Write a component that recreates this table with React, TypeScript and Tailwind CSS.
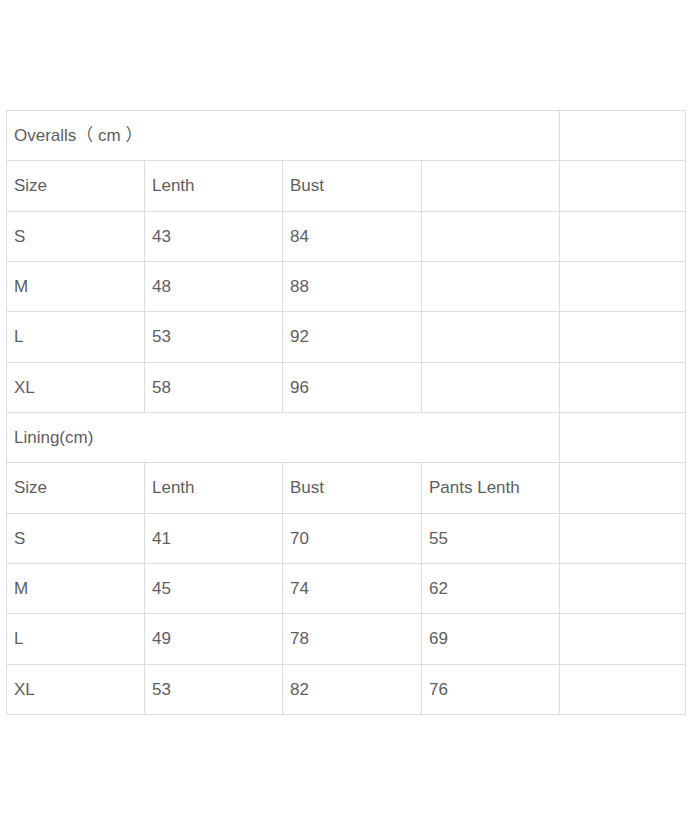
const overalls = [
  ['S', '43', '84', ''],
  ['M', '48', '88', ''],
  ['L', '53', '92', ''],
  ['XL', '58', '96', ''],
];

const lining = [
  ['S', '41', '70', '55'],
  ['M', '45', '74', '62'],
  ['L', '49', '78', '69'],
  ['XL', '53', '82', '76'],
];

const cell = 'border border-[#dcdcdc] px-[7px] align-middle text-left font-normal';

function Rows({ rows }: { rows: string[][] }) {
  return (
    <>
      {rows.map((r, i) => (
        <tr key={i} className="h-[50.33px]">
          {r.map((v, j) => (
            <td key={j} className={cell}>
              {v}
            </td>
          ))}
          <td className={cell}></td>
        </tr>
      ))}
    </>
  );
}

export default function App() {
  return (
    <div className="w-[700px] h-[823px] bg-white pt-[110px] pl-[6px] font-['Liberation_Sans','Noto_Sans_CJK_SC',sans-serif] text-[17px] text-[#5e5e5e]">
      <table className="border-collapse table-fixed w-[679px]">
        <colgroup>
          <col className="w-[138px]" />
          <col className="w-[138px]" />
          <col className="w-[139px]" />
          <col className="w-[138px]" />
          <col className="w-[126px]" />
        </colgroup>
        <tbody>
          <tr className="h-[50.33px]">
            <td colSpan={4} className={cell}>
              Overalls（ cm ）
            </td>
            <td className={cell}></td>
          </tr>
          <Rows rows={[['Size', 'Lenth', 'Bust', '']]} />
          <Rows rows={overalls} />
          <tr className="h-[50.33px]">
            <td colSpan={4} className={cell}>
              Lining(cm)
            </td>
            <td className={cell}></td>
          </tr>
          <Rows rows={[['Size', 'Lenth', 'Bust', 'Pants Lenth']]} />
          <Rows rows={lining} />
        </tbody>
      </table>
    </div>
  );
}
